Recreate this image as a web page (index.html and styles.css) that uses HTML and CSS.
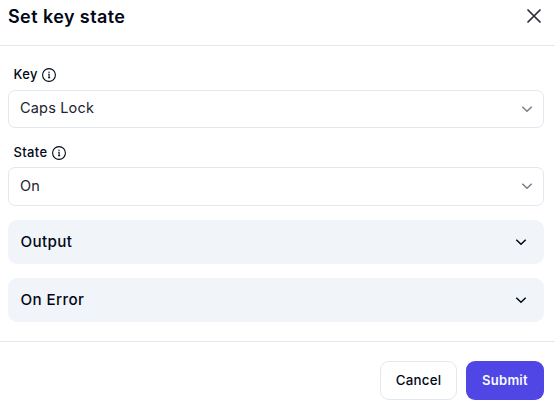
FILE: index.html
```html
<!DOCTYPE html>
<html lang="en">
<head>
<meta charset="utf-8">
<title>Set key state</title>
<link rel="stylesheet" href="styles.css">
</head>
<body>
<div class="dialog">
  <header class="header">
    <h1 class="title">Set key state</h1>
    <svg class="close" viewBox="0 0 16 16"><path d="M1.5 1.5l13 13M14.5 1.5l-13 13"/></svg>
  </header>
  <main class="content">
    <div class="label">Key
      <svg class="info" viewBox="0 0 14 14"><circle cx="7" cy="7" r="6.4"/><path d="M6.2 6.3h.9v3.3M6 9.8h2.2"/><circle class="dot" cx="7" cy="4.3" r=".7"/></svg>
    </div>
    <div class="select select-key"><span>Caps Lock</span>
      <svg class="chevron" viewBox="0 0 12 8"><path d="M1.3 1.7L6 6.3l4.7-4.6"/></svg>
    </div>
    <div class="label label-state">State
      <svg class="info" viewBox="0 0 14 14"><circle cx="7" cy="7" r="6.4"/><path d="M6.2 6.3h.9v3.3M6 9.8h2.2"/><circle class="dot" cx="7" cy="4.3" r=".7"/></svg>
    </div>
    <div class="select select-state"><span>On</span>
      <svg class="chevron" viewBox="0 0 12 8"><path d="M1.3 1.7L6 6.3l4.7-4.6"/></svg>
    </div>
    <div class="panel"><span>Output</span>
      <svg class="chevron" viewBox="0 0 12 8"><path d="M1.3 1.7L6 6.3l4.7-4.6"/></svg>
    </div>
    <div class="panel"><span>On Error</span>
      <svg class="chevron" viewBox="0 0 12 8"><path d="M1.3 1.7L6 6.3l4.7-4.6"/></svg>
    </div>
  </main>
  <footer class="footer">
    <button class="button cancel">Cancel</button>
    <button class="button submit">Submit</button>
  </footer>
</div>
</body>
</html>
```
FILE: styles.css
```css
* { box-sizing: border-box; }
body {
  margin: 0;
  background: #fff;
  color: #020817;
  font-family: Inter, "Liberation Sans", sans-serif;
}
.dialog { height: 410px; overflow: hidden; }
svg { fill: none; stroke: currentColor; flex: none; }
.header {
  display: flex;
  justify-content: space-between;
  height: 46px;
  padding: 4px 13px 0 8px;
  border-bottom: 1px solid #e2e8f0;
}
.title { margin: 0; font-size: 18px; line-height: 25px; font-weight: 600; letter-spacing: .023em; }
.close { width: 16px; height: 16px; margin-top: 4px; stroke: #272c3a; stroke-width: 1.7; }
.content { padding: 19px 11px 0 8px; }
.label {
  display: flex;
  align-items: center;
  gap: 4px;
  height: 18px;
  margin-bottom: 7px;
  padding-left: 5.4px;
  font-size: 13px;
  font-weight: 500;
  letter-spacing: .03em;
}
.label-state { margin-top: 15px; margin-bottom: 6px; }
.info { width: 14px; height: 14px; margin-top: 2px; stroke-width: 1.1; }
.label-state .info { margin-top: 1px; }
.info .dot { fill: currentColor; stroke: none; }
.select {
  display: flex;
  align-items: center;
  justify-content: space-between;
  height: 38px;
  padding: 0 10px 2px 11px;
  border: 1px solid #e2e8f0;
  border-radius: 7px;
  color: #20242e;
  font-size: 14.5px;
  letter-spacing: .012em;
}
.select-key span { margin-top: -2px; }
.select-state { height: 39px; }
.chevron { width: 12px; height: 8px; stroke-width: 1.5; }
.select .chevron { color: #7b7e87; margin-top: 2px; }
.select-state .chevron { margin-top: 1px; }
.panel {
  display: flex;
  align-items: center;
  justify-content: space-between;
  height: 44px;
  margin-top: 14px;
  padding: 0 17px 0 12.5px;
  border-radius: 9px;
  background: #f1f5f9;
  font-size: 15.2px;
  font-weight: 500;
  letter-spacing: .025em;
}
.panel span { margin-top: -1px; }
.footer {
  display: flex;
  justify-content: flex-end;
  gap: 9px;
  margin-top: 19px;
  padding: 19px 11px 0 0;
  border-top: 1px solid #e2e8f0;
}
.button {
  height: 39px;
  padding: 0 0 2px;
  border-radius: 9px;
  font: 500 13.3px Inter, "Liberation Sans", sans-serif;
  letter-spacing: .02em;
}
.cancel { width: 77px; border: 1px solid #e2e8f0; background: #fff; color: #020817; }
.submit { width: 78px; border: 0; background: #4f46e5; color: #f8fafc; font-size: 13px; font-weight: 600; }
```
